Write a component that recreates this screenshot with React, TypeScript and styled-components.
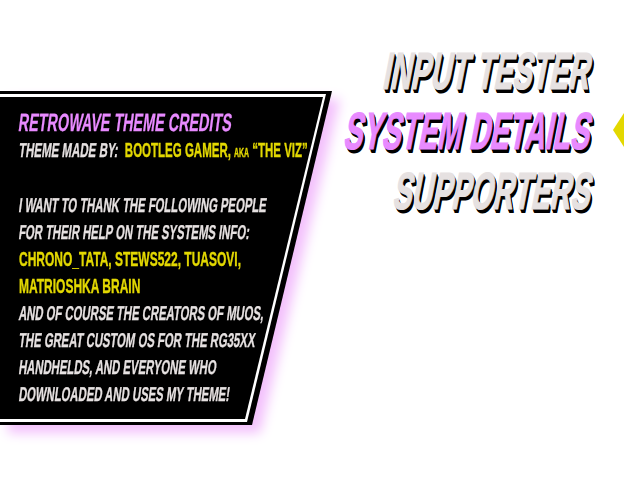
import * as React from 'react';
import styled, { createGlobalStyle } from 'styled-components';

const GlobalStyle = createGlobalStyle`
    html, body {
        margin: 0;
        background: #fff;
    }
`;

const Screen = styled.div`
    width: 640px;
    height: 480px;
    overflow: hidden;
    display: flex;
    align-items: flex-start;
    font-family: "Liberation Sans", Arial, sans-serif;
    font-weight: 700;
    background: #fff;
`;

const PanelGlow = styled.div`
    flex: none;
    margin-top: 91px;
    filter: drop-shadow(8px 8px 6px #f3c0fc);
`;

const PanelOuter = styled.div`
    width: 332px;
    height: 334px;
    padding: 3px 0;
    box-sizing: border-box;
    background: #000;
    clip-path: polygon(0 0, 332px 0, 252px 334px, 0 334px);
`;

const PanelLine = styled.div`
    width: 326px;
    height: 328px;
    padding: 3px 0;
    box-sizing: border-box;
    background: #fff;
    clip-path: polygon(0 0, 326px 0, 247px 328px, 0 328px);
`;

const PanelBody = styled.div`
    width: 323px;
    height: 322px;
    padding: 11px 0 0 19px;
    box-sizing: border-box;
    background: #000;
    clip-path: polygon(0 0, 323px 0, 245px 322px, 0 322px);
`;

const Line = styled.div<{ $size?: number; $height?: number; $stretch?: number }>`
    height: ${(p) => p.$height ?? 27}px;
    line-height: ${(p) => p.$height ?? 27}px;
    font-size: ${(p) => p.$size ?? 20}px;
    white-space: nowrap;
    transform: scaleX(${(p) => p.$stretch ?? 0.565});
    transform-origin: 0 50%;
`;

const Slanted = styled.span<{ $color?: string }>`
    display: inline-block;
    color: ${(p) => p.$color ?? '#e6e1e1'};
    -webkit-text-stroke: 0.3px currentColor;
    transform: skewX(-13deg);
`;

const Accent = styled.span`
    color: #e3d800;
    -webkit-text-stroke: 0.4px currentColor;
`;

const Small = styled.span`
    font-size: 12px;
`;

const Menu = styled.div`
    flex: 1;
    min-width: 0;
    display: flex;
    flex-direction: column;
    align-items: flex-end;
    padding: 41px 48px 0 0;
`;

const MenuRow = styled.div`
    position: relative;
`;

const MenuItem = styled.div<{ $active?: boolean }>`
    height: 60px;
    line-height: 60px;
    font-size: 52px;
    white-space: nowrap;
    color: ${(p) => (p.$active ? '#e88aff' : '#e6e1e1')};
    -webkit-text-stroke: 1.2px currentColor;
    text-shadow: 5px 4px 0 #000, 4px 3px 0 #000, 3px 2px 0 #000, 2px 1px 0 #000;
    transform: skewX(-11deg) scaleX(0.55);
    transform-origin: 100% 50%;
`;

const Pointer = styled.svg`
    position: absolute;
    left: calc(100% + 21px);
    top: 12px;
`;

export default function App() {
    return (
        <Screen>
            <GlobalStyle />
            <PanelGlow>
                <PanelOuter>
                    <PanelLine>
                        <PanelBody>
                            <Line $size={25} $height={29} $stretch={0.575}><Slanted $color="#e88aff">RETROWAVE THEME CREDITS</Slanted></Line>
                            <Line $stretch={0.575}>
                                <Slanted>THEME MADE BY:</Slanted>&nbsp; <Accent>BOOTLEG GAMER, <Small>AKA</Small> “THE VIZ”</Accent>
                            </Line>
                            <Line $height={28} />
                            <Line><Slanted>I WANT TO THANK THE FOLLOWING PEOPLE</Slanted></Line>
                            <Line><Slanted>FOR THEIR HELP ON THE SYSTEMS INFO:</Slanted></Line>
                            <Line $stretch={0.6}><Accent>CHRONO_TATA, STEWS522, TUASOVI,</Accent></Line>
                            <Line $stretch={0.6}><Accent>MATRIOSHKA BRAIN</Accent></Line>
                            <Line><Slanted>AND OF COURSE THE CREATORS OF MUOS,</Slanted></Line>
                            <Line><Slanted>THE GREAT CUSTOM OS FOR THE RG35XX</Slanted></Line>
                            <Line><Slanted>HANDHELDS, AND EVERYONE WHO</Slanted></Line>
                            <Line><Slanted>DOWNLOADED AND USES MY THEME!</Slanted></Line>
                        </PanelBody>
                    </PanelLine>
                </PanelOuter>
            </PanelGlow>
            <Menu>
                <MenuItem>INPUT TESTER</MenuItem>
                <MenuRow>
                    <MenuItem $active>SYSTEM DETAILS</MenuItem>
                    <Pointer width="11" height="34" viewBox="0 0 11 34">
                        <path d="M11 0 L0 17 L11 34 Z" fill="#e3d800" />
                    </Pointer>
                </MenuRow>
                <MenuItem>SUPPORTERS</MenuItem>
            </Menu>
        </Screen>
    );
}
